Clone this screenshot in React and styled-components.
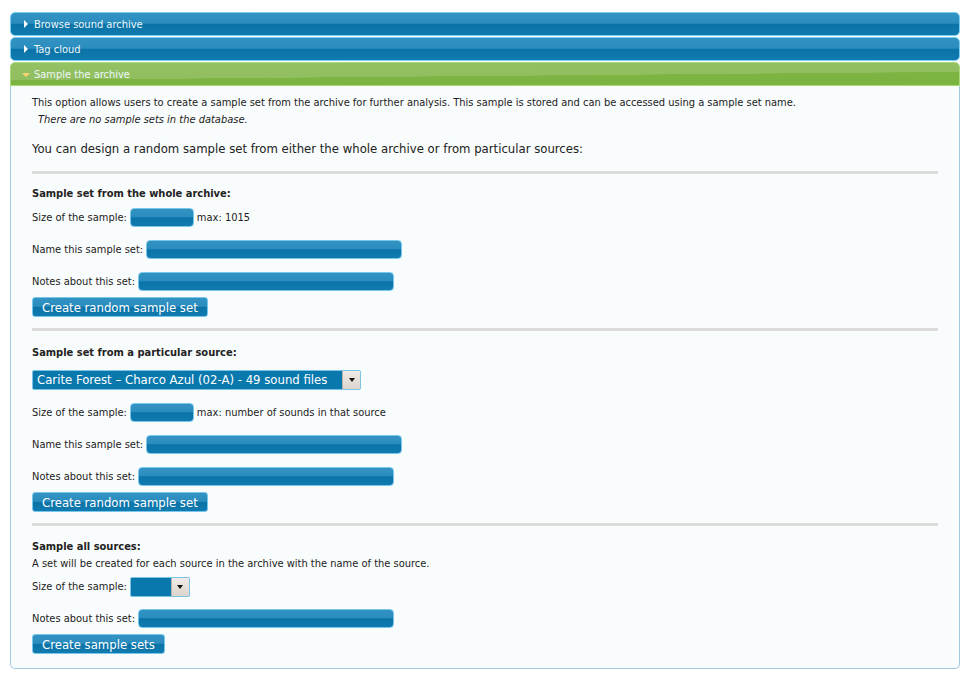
import React from 'react';
import styled, { createGlobalStyle } from 'styled-components';

const Global = createGlobalStyle`
  body {
    margin: 0;
    background: #fff;
    font-family: "DejaVu Sans Condensed", "DejaVu Sans", Verdana, sans-serif;
    color: #222;
  }
`;

const blueFill = `linear-gradient(to bottom, #3293c3 0%, #2b8dbe 46%, #0a73a8 52%, #117bb0 100%)`;

const Page = styled.div`
  padding: 12px 11px 10px 10px;
  display: flex;
  flex-direction: column;
  gap: 1px;
`;

const Header = styled.div`
  height: 24px;
  display: flex;
  align-items: center;
  gap: 4px;
  padding-left: 11px;
  box-sizing: border-box;
  font-size: 11px;
  color: #eef7fb;
  border: 1px solid ${(p) => (p.$open ? '#a9d975' : '#77cdf2')};
  border-radius: ${(p) => (p.$open ? '5px 5px 0 0' : '5px')};
  background: ${(p) =>
    p.$open
      ? 'linear-gradient(179.5deg, #93c163 0%, #91bf60 56%, #7db443 57%, #7ab33f 100%)'
      : blueFill};
`;

const Arrow = styled.span`
  width: 0;
  height: 0;
  ${(p) =>
    p.$open
      ? `border-left: 4px solid transparent; border-right: 4px solid transparent; border-top: 4px solid #f6d36e; margin-top: 1px;`
      : `border-top: 4px solid transparent; border-bottom: 4px solid transparent; border-left: 4px solid #fff; margin-left: 2px; margin-right: 2px;`}
`;

const Panel = styled.div`
  margin-top: -1px;
  border: 1px solid #a6c9e2;
  border-top: none;
  border-radius: 0 0 5px 5px;
  background: #f9fcfc;
  padding: 8px 21px 14px 21px;
  font-size: 11px;
`;

const Para = styled.p`
  margin: 0;
  line-height: 17px;
  ${(p) => p.$italic && 'font-style: italic; padding-left: 6px;'}
`;

const Lead = styled.p`
  margin: 13px 0 0;
  font-size: 13px;
  line-height: 16px;
`;

const Rule = styled.div`
  height: 3px;
  background: #dcdcdc;
  margin: ${(p) => p.$m || '13px 0 13px'};
`;

const Heading = styled.div`
  font-weight: bold;
  line-height: 14px;
`;

const Note = styled.div`
  line-height: 14px;
  margin-top: 3px;
`;

const Row = styled.div`
  display: flex;
  align-items: center;
  gap: 3px;
  height: 19px;
  margin-top: ${(p) => p.$mt || 13}px;
`;

const Field = styled.div`
  width: ${(p) => p.$w}px;
  height: 19px;
  box-sizing: border-box;
  border: 1px solid #77c7ec;
  border-radius: 4px;
  background: ${blueFill};
`;

const Select = styled.div`
  display: flex;
  align-items: stretch;
  width: ${(p) => p.$w}px;
  height: 20px;
  box-sizing: border-box;
  border: 1px solid #7cc4e6;
  border-radius: 2px;
  background: #0878ad;
  color: #fff;
  font-size: 13px;
  margin-top: ${(p) => p.$mt || 0}px;
`;

const SelectText = styled.span`
  flex: 1;
  padding-left: 4px;
  line-height: 18px;
  white-space: nowrap;
  overflow: hidden;
`;

const SelectButton = styled.span`
  width: 17px;
  background: linear-gradient(to bottom, #efebe6, #dcd5cd);
  border-left: 1px solid #b9b2a9;
  display: flex;
  align-items: center;
  justify-content: center;
  &::after {
    content: '';
    border-left: 3px solid transparent;
    border-right: 3px solid transparent;
    border-top: 4px solid #111;
  }
`;

const Button = styled.div`
  align-self: flex-start;
  margin-top: 6px;
  height: 20px;
  box-sizing: border-box;
  padding: 0 9px;
  display: inline-flex;
  align-items: center;
  border: 1px solid #77c7ec;
  border-radius: 3px;
  background: ${blueFill};
  color: #fff;
  font-size: 13px;
`;

const Section = styled.div`
  display: flex;
  flex-direction: column;
`;

const App = () => {
  return (
    <Page>
      <Global />
      <Header>
        <Arrow />
        Browse sound archive
      </Header>
      <Header>
        <Arrow />
        Tag cloud
      </Header>
      <Header $open>
        <Arrow $open />
        Sample the archive
      </Header>
      <Panel>
        <Para>
          This option allows users to create a sample set from the archive for further analysis. This sample is stored and can be accessed using a sample set name.
        </Para>
        <Para $italic>There are no sample sets in the database.</Para>
        <Lead>You can design a random sample set from either the whole archive or from particular sources:</Lead>
        <Rule $m="14px 0 13px" />

        <Section>
          <Heading>Sample set from the whole archive:</Heading>
          <Row $mt={7}>
            Size of the sample: <Field $w={64} /> max: 1015
          </Row>
          <Row>
            Name this sample set: <Field $w={256} />
          </Row>
          <Row>
            Notes about this set: <Field $w={256} />
          </Row>
          <Button>Create random sample set</Button>
        </Section>
        <Rule $m="11px 0 15px" />

        <Section>
          <Heading>Sample set from a particular source:</Heading>
          <Select $w={329} $mt={10}>
            <SelectText>Carite Forest – Charco Azul (02-A) - 49 sound files</SelectText>
            <SelectButton />
          </Select>
          <Row $mt={13}>
            Size of the sample: <Field $w={64} /> max: number of sounds in that source
          </Row>
          <Row>
            Name this sample set: <Field $w={256} />
          </Row>
          <Row>
            Notes about this set: <Field $w={256} />
          </Row>
          <Button>Create random sample set</Button>
        </Section>
        <Rule $m="11px 0 14px" />

        <Section>
          <Heading>Sample all sources:</Heading>
          <Note>A set will be created for each source in the archive with the name of the source.</Note>
          <Row $mt={6}>
            Size of the sample:
            <Select $w={60}>
              <SelectText />
              <SelectButton />
            </Select>
          </Row>
          <Row>
            Notes about this set: <Field $w={256} />
          </Row>
          <Button>Create sample sets</Button>
        </Section>
      </Panel>
    </Page>
  );
};

export default App;
